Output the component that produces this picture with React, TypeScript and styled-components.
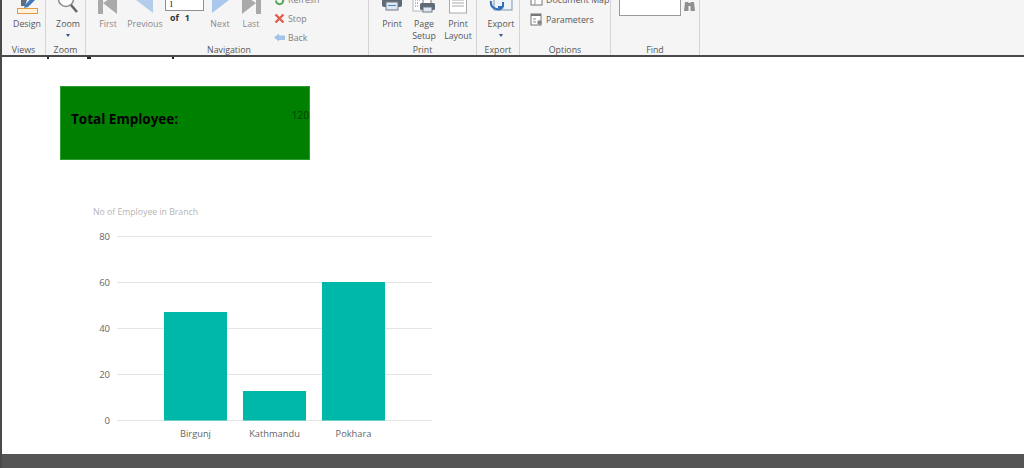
import styled, { createGlobalStyle } from "styled-components"

const GlobalStyle = createGlobalStyle`
  html,
  body {
    margin: 0;
    padding: 0;
    background: #fff;
  }

  #root {
    height: 468px;
    overflow: hidden;
  }
`

const Page = styled.div`
  display: flex;
  flex-direction: column;
  width: 1024px;
  height: 468px;
  font-family: "Open Sans", "Noto Sans", sans-serif;
`

const Main = styled.div`
  display: flex;
  flex: 1;
  flex-direction: column;
  min-height: 0;
  border-left: 2px solid #4a4a4a;
`

const Ribbon = styled.div`
  display: flex;
  flex: none;
  height: 55px;
  background: #f5f5f5;
  border-bottom: 2px solid #4a4a4a;
  overflow: hidden;
`

const Group = styled.div<{ $width: number }>`
  display: flex;
  flex: none;
  flex-direction: column;
  justify-content: flex-end;
  width: ${(p) => p.$width}px;
  height: 55px;
  border-right: 1px solid #d4d4d4;
  box-sizing: border-box;
`

const GroupBody = styled.div<{ $pad?: number }>`
  display: flex;
  align-items: flex-end;
  height: 43px;
  padding-left: ${(p) => p.$pad ?? 0}px;
`

const GroupLabel = styled.div<{ $shift?: number }>`
  height: 13px;
  line-height: 16px;
  padding-left: ${(p) => p.$shift ?? 0}px;
  font-size: 8.8px;
  color: #555;
  text-align: center;
`

const BigButton = styled.div<{ $width: number; $muted?: boolean }>`
  display: flex;
  flex: none;
  flex-direction: column;
  align-items: center;
  width: ${(p) => p.$width}px;
  height: 43px;
  font-size: 8.8px;
  line-height: 12px;
  color: ${(p) => (p.$muted ? "#8a8a8a" : "#555")};
  text-align: center;

  svg {
    flex: none;
    margin-top: -5px;
    margin-bottom: 4px;
    display: block;
  }
`

const Caret = styled.div`
  width: 0;
  height: 0;
  margin-top: 4px;
  border-left: 2.5px solid transparent;
  border-right: 2.5px solid transparent;
  border-top: 3px solid #33568f;
`

const PageBox = styled.div`
  display: flex;
  flex: none;
  flex-direction: column;
  width: 39px;
  height: 43px;
  font-size: 8.8px;
  font-weight: 700;
  color: #333;
`

const PageInput = styled.div`
  flex: none;
  width: 34px;
  height: 10px;
  margin-left: -1px;
  padding-left: 3px;
  line-height: 9px;
  font-family: "Liberation Serif", serif;
  font-size: 9px;
  font-weight: 400;
  color: #222;
  background: #fff;
  border: 1px solid #8f8f8f;
  margin-bottom: 2px;
`

const PageOf = styled.div`
  display: flex;
  gap: 6px;
  padding-left: 4px;
  line-height: 11px;
`

const SmallList = styled.div`
  display: flex;
  flex: none;
  flex-direction: column;
  justify-content: flex-end;
  align-self: flex-start;
  gap: 6px;
  margin-top: -5px;
  height: 50px;
  padding-left: 7px;
`

const SmallItem = styled.div<{ $muted?: boolean }>`
  display: flex;
  align-items: center;
  gap: 3px;
  height: 13px;
  font-size: 8.8px;
  white-space: nowrap;
  color: ${(p) => (p.$muted ? "#808080" : "#555")};
`

const OptionList = styled.div`
  display: flex;
  flex-direction: column;
  align-self: flex-start;
  width: 100%;
  margin-top: -7px;
  padding-left: 10px;
  gap: 7px;
`

const FindRow = styled.div`
  display: flex;
  align-items: flex-start;
  align-self: flex-start;
  gap: 2px;
  margin-top: -2px;
  padding-left: 8px;
`

const FindInput = styled.div`
  width: 60px;
  height: 16px;
  background: #fff;
  border: 1px solid #9a9a9a;

  & + svg {
    margin-top: 3px;
  }
`

const Content = styled.div`
  flex: 1;
  display: flex;
  flex-direction: column;
  align-items: flex-start;
  background: #fff;
`

/* bottoms of the report title's letters, the rest is hidden behind the ribbon */
const TitleRemnants = styled.div`
  display: flex;
  flex: none;
  align-items: flex-start;
  height: 29px;
  padding-left: 45px;
`

const Remnant = styled.span<{ $gap: number; $width: number }>`
  flex: none;
  width: ${(p) => p.$width}px;
  height: 2px;
  margin-left: ${(p) => p.$gap}px;
  background: #222;
`

const TotalCard = styled.div`
  display: flex;
  flex: none;
  align-items: center;
  justify-content: space-between;
  width: 250px;
  height: 74px;
  margin-left: 58px;
  padding: 0 0 9px 10px;
  box-sizing: border-box;
  background: #008000;
  border: 1px solid #2f9a2f;
  color: #000;
`

const TotalLabel = styled.span`
  font-size: 13.5px;
  font-weight: 700;
`

const TotalValue = styled.span`
  font-size: 10px;
  margin-bottom: 7px;
  color: #043d04;
`

const Chart = styled.svg`
  display: block;
  flex: none;
  margin-top: 45px;
  margin-left: 81px;

  text {
    font-family: "Open Sans", "Noto Sans", sans-serif;
  }
`

const Footer = styled.div`
  flex: none;
  height: 14px;
  background: #555;
`

const ticks = [
  { y: 80, cy: 236.5 },
  { y: 60, cy: 282.5 },
  { y: 40, cy: 328.5 },
  { y: 20, cy: 374.5 },
  { y: 0, cy: 420.5 },
]

const bars = [
  { name: "Birgunj", x: 164, width: 63, top: 312 },
  { name: "Kathmandu", x: 243, width: 63, top: 391 },
  { name: "Pokhara", x: 322, width: 63, top: 282 },
]

function Triangle({ dir, tone }: { dir: "left" | "right"; tone: string }) {
  return (
    <svg width="20" height="20" viewBox="0 0 20 20">
      <path d={dir === "left" ? "M1 6 L18 -5 V19 Z" : "M19 6 L2 -5 V19 Z"} fill={tone} />
    </svg>
  )
}

function Skip({ dir }: { dir: "left" | "right" }) {
  return (
    <svg width="20" height="20" viewBox="0 0 20 20">
      {dir === "left" ? (
        <path d="M0 0 H5 V20 H0 Z M5 9 L19 0 V20 Z" fill="#a9a9a9" />
      ) : (
        <path d="M20 0 H15 V20 H20 Z M15 9 L1 0 V20 Z" fill="#a9a9a9" />
      )}
    </svg>
  )
}

export default function App() {
  return (
    <Page>
      <GlobalStyle />
      <Main>
        <Ribbon>
          <Group $width={44}>
            <GroupBody $pad={5}>
              <BigButton $width={40}>
                <svg width="24" height="20" viewBox="0 0 24 20">
                  <path d="M6 0 H17 L12 6 L10 12 H6 Z" fill="#5f6e7e" />
                  <path d="M10 11 L19 1 L22 4 L13 13 L9 14 Z" fill="#3f78bf" />
                  <rect x="2.5" y="14.5" width="20" height="5" fill="#fff3dc" stroke="#e49a3c" />
                </svg>
                <span>Design</span>
              </BigButton>
            </GroupBody>
            <GroupLabel>Views</GroupLabel>
          </Group>
          <Group $width={40}>
            <GroupBody $pad={4}>
              <BigButton $width={36}>
                <svg width="22" height="20" viewBox="0 0 22 20">
                  <circle cx="9" cy="5" r="7.5" fill="#fff" stroke="#8c8c8c" strokeWidth="1.5" />
                  <path d="M14 11 L20 18" stroke="#666" strokeWidth="2.6" />
                </svg>
                <span>Zoom</span>
                <Caret />
              </BigButton>
            </GroupBody>
            <GroupLabel>Zoom</GroupLabel>
          </Group>
          <Group $width={283}>
            <GroupBody $pad={6}>
              <BigButton $width={32} $muted>
                <Skip dir="left" />
                <span>First</span>
              </BigButton>
              <BigButton $width={42} $muted>
                <Triangle dir="left" tone="#b4cdea" />
                <span>Previous</span>
              </BigButton>
              <PageBox>
                <PageInput>1</PageInput>
                <PageOf>
                  <span>of</span>
                  <span>1</span>
                </PageOf>
              </PageBox>
              <BigButton $width={30} $muted>
                <Triangle dir="right" tone="#a9c8ec" />
                <span>Next</span>
              </BigButton>
              <BigButton $width={32} $muted>
                <Skip dir="right" />
                <span>Last</span>
              </BigButton>
              <SmallList>
                <SmallItem $muted>
                  <svg width="11" height="11" viewBox="0 0 11 11">
                    <path d="M2 5.5 A3.6 3.6 0 1 0 5.5 2 H8" fill="none" stroke="#53a653" strokeWidth="2" />
                  </svg>
                  <span>Refresh</span>
                </SmallItem>
                <SmallItem $muted>
                  <svg width="11" height="11" viewBox="0 0 11 11">
                    <path d="M1.5 1.5 L9.5 9.5 M9.5 1.5 L1.5 9.5" stroke="#dc6050" strokeWidth="2.4" />
                  </svg>
                  <span>Stop</span>
                </SmallItem>
                <SmallItem $muted>
                  <svg width="11" height="11" viewBox="0 0 11 11">
                    <path d="M0 5.5 L5 1.5 V3.5 H11 V8 H5 V9.5 Z" fill="#a3c3e8" />
                  </svg>
                  <span>Back</span>
                </SmallItem>
              </SmallList>
            </GroupBody>
            <GroupLabel $shift={4}>Navigation</GroupLabel>
          </Group>
          <Group $width={108}>
            <GroupBody $pad={5}>
              <BigButton $width={36}>
                <svg width="22" height="20" viewBox="0 0 22 20">
                  <rect x="5" y="0" width="12" height="6" fill="#fff" stroke="#777" />
                  <rect x="1" y="3" width="20" height="10" rx="2" fill="#5f6a75" />
                  <rect x="5" y="8" width="12" height="8" fill="#dfe8f2" stroke="#6d7a86" />
                  <rect x="7" y="11" width="8" height="1" fill="#4e85c2" />
                </svg>
                <span>Print</span>
              </BigButton>
              <BigButton $width={28}>
                <svg width="24" height="20" viewBox="0 0 24 20">
                  <rect x="1" y="1" width="12" height="16" fill="#fff" stroke="#b5b5b5" />
                  <path d="M3 6 H9 M3 9 H6 M3 12 H6" stroke="#777" strokeDasharray="1 1" />
                  <rect x="11" y="5" width="8" height="5" fill="#fff" stroke="#777" />
                  <rect x="8" y="9" width="15" height="7" rx="1.5" fill="#5f6a75" />
                  <rect x="11" y="13" width="9" height="5" fill="#dfe8f2" stroke="#6d7a86" />
                </svg>
                <span>Page</span>
                <span>Setup</span>
              </BigButton>
              <BigButton $width={40}>
                <svg width="18" height="20" viewBox="0 0 18 20">
                  <rect x="0.5" y="-2" width="17" height="21" fill="#fff" stroke="#aaa" />
                  <path d="M3 3 H15 M3 6 H15 M3 9 H15 M3 12 H15" stroke="#aaa" />
                </svg>
                <span>Print</span>
                <span>Layout</span>
              </BigButton>
            </GroupBody>
            <GroupLabel>Print</GroupLabel>
          </Group>
          <Group $width={43}>
            <GroupBody $pad={6}>
              <BigButton $width={36}>
                <svg width="24" height="20" viewBox="0 0 24 20">
                  <rect x="5" y="0" width="18" height="16" fill="#eef3f9" stroke="#7d93ab" />
                  <rect x="5" y="3" width="18" height="3" fill="#2f6fb4" />
                  <path d="M2 7 A7 7 0 0 0 14 13 M14 13 V8 M14 13 H9" fill="none" stroke="#2f6fb4" strokeWidth="2" />
                </svg>
                <span>Export</span>
                <Caret />
              </BigButton>
            </GroupBody>
            <GroupLabel>Export</GroupLabel>
          </Group>
          <Group $width={91}>
            <GroupBody>
              <OptionList>
                <SmallItem>
                  <svg width="13" height="13" viewBox="0 0 13 13">
                    <rect x="1" y="1" width="11" height="11" fill="#fff" stroke="#777" />
                    <path d="M5 1 V12 M1 5 H12" stroke="#999" />
                  </svg>
                  <span>Document Map</span>
                </SmallItem>
                <SmallItem>
                  <svg width="13" height="13" viewBox="0 0 13 13">
                    <rect x="1" y="1" width="10" height="11" fill="#fff" stroke="#777" />
                    <rect x="1" y="1" width="10" height="2" fill="#777" />
                    <path d="M3 6 H6 M3 9 H6" stroke="#888" />
                    <circle cx="9.5" cy="9.5" r="2.2" fill="#888" />
                  </svg>
                  <span>Parameters</span>
                </SmallItem>
              </OptionList>
            </GroupBody>
            <GroupLabel>Options</GroupLabel>
          </Group>
          <Group $width={89}>
            <GroupBody>
              <FindRow>
                <FindInput />
                <svg width="13" height="11" viewBox="0 0 13 11">
                  <path d="M1 10 L2 1 H5.5 V10 Z M12 10 L11 1 H7.5 V10 Z" fill="#8f8f8f" />
                  <rect x="5" y="2" width="3" height="3" fill="#8f8f8f" />
                </svg>
              </FindRow>
            </GroupBody>
            <GroupLabel>Find</GroupLabel>
          </Group>
        </Ribbon>
        <Content>
          <TitleRemnants>
            <Remnant $gap={0} $width={2} />
            <Remnant $gap={38} $width={4} />
            <Remnant $gap={81} $width={2} />
          </TitleRemnants>
          <TotalCard>
            <TotalLabel>Total Employee:</TotalLabel>
            <TotalValue>120</TotalValue>
          </TotalCard>
          <Chart width="352" height="237" viewBox="83 205 352 237">
            <text x="93" y="215" fontSize="8.7" fill="#b5b5b5">
              No of Employee in Branch
            </text>
            {ticks.map((t) => (
              <g key={t.y}>
                <line x1="117" x2="432" y1={t.cy} y2={t.cy} stroke="#e4e4e4" />
                <text x="110" y={t.cy + 3.5} fontSize="9.5" fill="#666" textAnchor="end">
                  {t.y}
                </text>
              </g>
            ))}
            {bars.map((b) => (
              <g key={b.name}>
                <rect x={b.x} y={b.top} width={b.width} height={420.5 - b.top} fill="#00b8aa" />
                <text x={b.x + b.width / 2} y="437" fontSize="9.3" fill="#666" textAnchor="middle">
                  {b.name}
                </text>
              </g>
            ))}
          </Chart>
        </Content>
        <Footer />
      </Main>
    </Page>
  )
}
